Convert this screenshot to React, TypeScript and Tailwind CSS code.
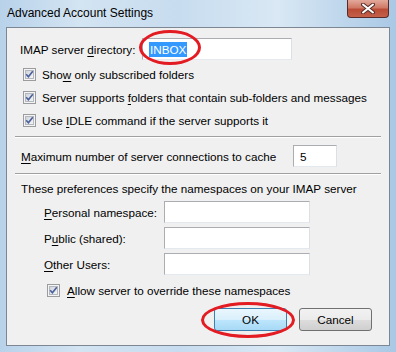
import React from "react";

const FONT = { fontFamily: '"Segoe UI", "Liberation Sans", Arial, sans-serif' };

function Mn({ children }: { children: React.ReactNode }) {
  return <span className="underline underline-offset-2">{children}</span>;
}

function CheckBox() {
  return (
    <svg width="13" height="13" viewBox="0 0 13 13" className="shrink-0">
      <defs>
        <linearGradient id="cbfill" x1="0" y1="0" x2="1" y2="1">
          <stop offset="0" stopColor="#cdd2d8" />
          <stop offset="1" stopColor="#f7f7f7" />
        </linearGradient>
      </defs>
      <rect x="0.5" y="0.5" width="12" height="12" fill="#f4f4f4" stroke="#9a9c9e" />
      <rect x="2.5" y="2.5" width="8" height="8" fill="url(#cbfill)" stroke="#b4b8be" />
      <path d="M3.2 6.3 L5.4 8.8 L9.8 3.2" fill="none" stroke="#4a5f9c" strokeWidth="1.6" />
    </svg>
  );
}

function CheckRow({ children }: { children: React.ReactNode }) {
  return (
    <div className="flex h-[23px] items-center gap-[6px] pl-[16px]">
      <CheckBox />
      <span>{children}</span>
    </div>
  );
}

function Field({ w, value }: { w: string; value?: React.ReactNode }) {
  return (
    <div
      className={`${w} flex h-[22px] items-center border border-[#abadb3] border-b-[#e3e9ef] border-r-[#dbdfe6] bg-white pl-[6px]`}
    >
      {value}
    </div>
  );
}

function Separator({ mt }: { mt: string }) {
  return (
    <div className={`${mt} mx-[8px] flex flex-col`}>
      <div className="h-px bg-[#a0a0a0]" />
      <div className="h-px bg-white" />
    </div>
  );
}

function Button({ label, primary }: { label: string; primary?: boolean }) {
  return (
    <div
      className={`flex h-[23px] w-[73px] items-center justify-center rounded-[3px] border ${
        primary
          ? "border-[#3c7fb1] bg-[linear-gradient(#eaf6fd_0%,#d9f0fc_50%,#bee6fd_51%,#a7d9f5_100%)]"
          : "border-[#707070] bg-[linear-gradient(#f2f2f2_0%,#ebebeb_50%,#dddddd_51%,#cfcfcf_100%)]"
      }`}
    >
      <span className="px-px">{label}</span>
    </div>
  );
}

export default function App() {
  return (
    <div
      style={FONT}
      className="flex h-[352px] w-[396px] flex-col bg-[linear-gradient(90deg,#b8d2ea_0%,#d3e4f2_20%,#c7dcef_45%,#d9e8f4_70%,#a9c8e5_100%)] text-[11.7px] leading-[15px] text-black"
    >
      {/* title bar */}
      <div className="relative h-[27px] shrink-0">
        <span className="absolute left-[7px] top-[6px] text-[12px]">Advanced Account Settings</span>
        <div className="absolute right-[7px] top-0 flex h-[18px] w-[42px] items-center justify-center rounded-b-[4px] border border-t-0 border-[#5a2a2a] bg-[linear-gradient(#e3a99c_0%,#d07a66_45%,#bb4c37_55%,#c4604a_100%)]">
          <svg width="14" height="11" viewBox="0 0 14 11">
            <path d="M2 1.5 L12 9.5 M12 1.5 L2 9.5" stroke="#5a2f2b" strokeWidth="4" strokeLinecap="round" />
            <path d="M2 1.5 L12 9.5 M12 1.5 L2 9.5" stroke="#ffffff" strokeWidth="2" strokeLinecap="round" />
          </svg>
        </div>
      </div>

      {/* client area */}
      <div className="relative mx-[6px] mb-[6px] flex flex-1 flex-col border border-[#7d8794] bg-[#f0f0f0]">
        <div className="mt-[10px] flex items-center pl-[13px]">
          <span className="w-[122px]">
            IMAP server <Mn>d</Mn>irectory:
          </span>
          <Field
            w="w-[150px]"
            value={<span className="bg-[#3399ff] px-px text-white">INBOX</span>}
          />
        </div>

        <div className="mt-[3px] flex flex-col">
          <CheckRow>
            Sho<Mn>w</Mn> only subscribed folders
          </CheckRow>
          <CheckRow>
            Server supports <Mn>f</Mn>olders that contain sub-folders and messages
          </CheckRow>
          <CheckRow>
            Use <Mn>I</Mn>DLE command if the server supports it
          </CheckRow>
        </div>

        <Separator mt="mt-[4px]" />

        <div className="mt-[7px] flex items-center pl-[14px]">
          <span className="w-[272px]">
            <Mn>M</Mn>aximum number of server connections to cache
          </span>
          <Field w="w-[44px]" value={<span>5</span>} />
        </div>

        <Separator mt="mt-[6px]" />

        <div className="mt-[6px] pl-[14px]">These preferences specify the namespaces on your IMAP server</div>

        <div className="mt-[5px] flex flex-col gap-[4px] pl-[37px]">
          <div className="flex items-center">
            <span className="w-[120px]">
              <Mn>P</Mn>ersonal namespace:
            </span>
            <Field w="w-[146px]" />
          </div>
          <div className="flex items-center">
            <span className="w-[120px]">
              P<Mn>u</Mn>blic (shared):
            </span>
            <Field w="w-[146px]" />
          </div>
          <div className="flex items-center">
            <span className="w-[120px]">
              <Mn>O</Mn>ther Users:
            </span>
            <Field w="w-[146px]" />
          </div>
        </div>

        <div className="mt-[8px] flex items-center gap-[7px] pl-[40px]">
          <CheckBox />
          <span>
            <Mn>A</Mn>llow server to override these namespaces
          </span>
        </div>

        <div className="mt-[10px] flex justify-end gap-[12px] pr-[17px]">
          <Button label="OK" primary />
          <Button label="Cancel" />
        </div>

        {/* red annotation ellipses */}
        <div className="pointer-events-none absolute left-[132px] top-[2px] h-[35px] w-[62px] rounded-[50%] border-[3px] border-[#e31b23]" />
        <div className="pointer-events-none absolute left-[194px] top-[274px] h-[36px] w-[94px] rounded-[50%] border-[3px] border-[#e31b23]" />
      </div>
    </div>
  );
}
